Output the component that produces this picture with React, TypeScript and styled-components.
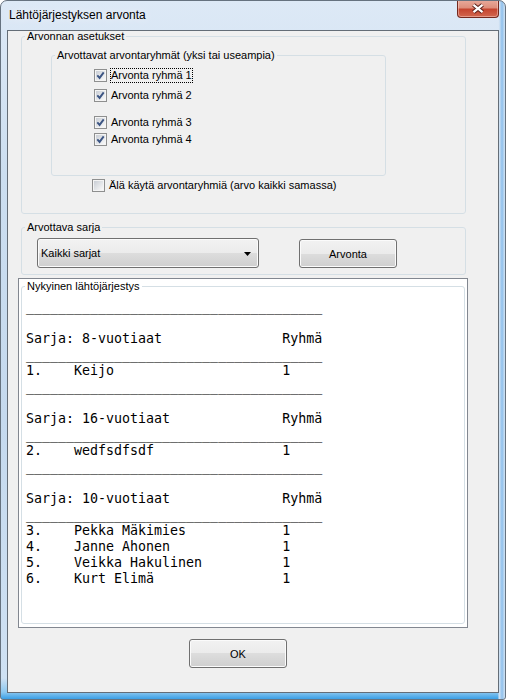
import React from 'react';
import styled, {createGlobalStyle} from 'styled-components';

const GlobalStyle = createGlobalStyle`
  html, body {
    margin: 0;
    padding: 0;
    background: #ffffff;
  }
  body {
    font-family: "Liberation Sans", Arial, sans-serif;
  }
`;

type Row = { pos: string; name: string; group: string };
type Series = { name: string; rows: Row[] };

const SERIES: Series[] = [
    {name: '8-vuotiaat', rows: [{pos: '1.', name: 'Keijo', group: '1'}]},
    {name: '16-vuotiaat', rows: [{pos: '2.', name: 'wedfsdfsdf', group: '1'}]},
    {
        name: '10-vuotiaat', rows: [
            {pos: '3.', name: 'Pekka Mäkimies', group: '1'},
            {pos: '4.', name: 'Janne Ahonen', group: '1'},
            {pos: '5.', name: 'Veikka Hakulinen', group: '1'},
            {pos: '6.', name: 'Kurt Elimä', group: '1'},
        ]
    },
];

const RULE = '_'.repeat(37);

const buildOrder = (series: Series[]) => {
    const lines: string[] = [];
    series.forEach(s => {
        lines.push(RULE, '');
        lines.push(`Sarja: ${s.name}`.padEnd(32) + 'Ryhmä');
        lines.push(RULE);
        s.rows.forEach(r => lines.push((r.pos.padEnd(6) + r.name).padEnd(32) + r.group));
    });
    return lines.join('\n');
};

const GROUPS = [
    {label: 'Arvonta ryhmä 1', mt: 6, focused: true},
    {label: 'Arvonta ryhmä 2', mt: 3, focused: false},
    {label: 'Arvonta ryhmä 3', mt: 10, focused: false},
    {label: 'Arvonta ryhmä 4', mt: 0, focused: false},
];

const Window = styled.div`
  box-sizing: border-box;
  width: 506px;
  height: 700px;
  display: flex;
  flex-direction: column;
  padding: 0 6px 6px 6px;
  border: 1px solid #66727f;
  border-radius: 7px 7px 3px 3px;
  overflow: hidden;
  background: linear-gradient(90deg, rgba(255, 255, 255, 0) 497px, #d8e6f4 498px, #8fc0ec 501px, #d2e3f3 504px),
  linear-gradient(180deg, #dde9f6 0%, #ccdef0 25%, #c5d9ee 60%, #cfe1f3 97%, #8cc8f0 99%, #3a9fe6 100%);
`;

const TitleBar = styled.div`
  flex: none;
  height: 29px;
  display: flex;
  justify-content: space-between;
  align-items: flex-start;
`;

const Title = styled.span`
  padding-left: 2px;
  font-size: 12px;
  line-height: 29px;
  color: #000;
  text-shadow: 0 0 8px rgba(255, 255, 255, 0.9);
`;

const CloseButton = styled.div`
  box-sizing: border-box;
  width: 42px;
  height: 18px;
  margin-top: -1px;
  border: 1px solid #74291e;
  border-top: none;
  border-radius: 0 0 4px 4px;
  background: linear-gradient(180deg, #e9ab9c 0%, #de8e7b 46%, #c5452f 54%, #d2674f 100%);
  box-shadow: inset 0 0 0 1px rgba(255, 220, 210, 0.45);
  display: flex;
  align-items: center;
  justify-content: center;
`;

const Client = styled.div`
  flex: 1;
  border: 1px solid #646d77;
  background: #f0f0f0;
  display: flex;
  flex-direction: column;
  align-items: flex-start;
  font-size: 11px;
  color: #000;
`;

const GroupBox = styled.fieldset<{ $w: number; $h?: number; $mt?: number; $ml?: number; $pb?: number }>`
  box-sizing: border-box;
  width: ${p => p.$w}px;
  ${p => p.$h ? `height: ${p.$h}px;` : ''}
  margin: ${p => p.$mt ?? 0}px 0 0 ${p => p.$ml ?? 0}px;
  padding: 0 0 ${p => p.$pb ?? 0}px 0;
  min-inline-size: 0;
  border: 1px solid #d5dfe5;
  border-radius: 3px;
  display: flex;
  flex-direction: column;
  align-items: flex-start;
`;

const Legend = styled.legend`
  margin-left: 3px;
  padding: 0 2px;
  font-size: 11px;
  line-height: 11px;
`;

const CheckRow = styled.div<{ $mt: number; $ml: number }>`
  height: 17px;
  margin: ${p => p.$mt}px 0 0 ${p => p.$ml}px;
  display: flex;
  align-items: center;
`;

const CheckLabel = styled.span<{ $focused?: boolean }>`
  margin-left: 3px;
  padding: 1px 1px;
  line-height: 13px;
  white-space: nowrap;
  outline: ${p => p.$focused ? '1px dotted #000' : 'none'};
  outline-offset: -1px;
`;

const BoxSvg = styled.svg`
  flex: none;
  display: block;
`;

const SelectRow = styled.div`
  margin: 5px 0 0 15px;
  display: flex;
  align-items: flex-start;
  gap: 40px;
`;

const ComboBox = styled.div`
  box-sizing: border-box;
  width: 222px;
  height: 30px;
  padding: 0 7px 0 3px;
  border: 1px solid #707070;
  border-radius: 3px;
  background: linear-gradient(180deg, #f2f2f2 0%, #ebebeb 50%, #dddddd 50%, #cfcfcf 100%);
  box-shadow: inset 0 0 0 1px #fbfbfb;
  display: flex;
  align-items: center;
  justify-content: space-between;
`;

const Arrow = styled.svg`
  margin-top: 2px;
`;

const Button = styled.div<{ $mt: number; $ml?: number }>`
  box-sizing: border-box;
  width: 98px;
  height: 29px;
  margin: ${p => p.$mt}px 0 0 ${p => p.$ml ?? 0}px;
  border: 1px solid #707070;
  border-radius: 3px;
  background: linear-gradient(180deg, #f2f2f2 0%, #ebebeb 50%, #dddddd 50%, #cfcfcf 100%);
  box-shadow: inset 0 0 0 1px #fbfbfb;
  display: flex;
  align-items: center;
  justify-content: center;
  font-size: 11px;
`;

const ListPanel = styled.div`
  box-sizing: border-box;
  width: 450px;
  height: 350px;
  margin: 3px 0 0 10px;
  border: 1px solid #828790;
  background: #ffffff;
  display: flex;
  flex-direction: column;
  align-items: flex-start;
`;

const OrderText = styled.pre`
  margin: 7px 0 0 4px;
  font-family: "DejaVu Sans Mono", "Liberation Mono", monospace;
  font-size: 13.3px;
  line-height: 16px;
  color: #000;
`;

const CheckBox = ({checked}: { checked: boolean }) => (
    <BoxSvg width="13" height="13" viewBox="0 0 13 13">
        <defs>
            <linearGradient id="cbFill" x1="0" y1="0" x2="1" y2="1">
                <stop offset="0" stopColor="#c9ced5"/>
                <stop offset="1" stopColor="#f9f9f9"/>
            </linearGradient>
        </defs>
        <rect x="0.5" y="0.5" width="12" height="12" fill="#f4f4f4" stroke="#8e8f8f"/>
        <rect x="2" y="2" width="9" height="9" fill="url(#cbFill)"/>
        {checked && (
            <path d="M3.3 6.4 L5.6 8.9 L9.7 3.4" fill="none" stroke="#3c5583" strokeWidth="1.9"/>
        )}
    </BoxSvg>
);

function App() {
    return (
        <>
            <GlobalStyle/>
            <Window>
                <TitleBar>
                    <Title>Lähtöjärjestyksen arvonta</Title>
                    <CloseButton>
                        <svg width="14" height="11" viewBox="0 0 14 11">
                            <path d="M2.5 1.8 L11.5 9.2 M11.5 1.8 L2.5 9.2" stroke="#5b2019" strokeWidth="4.2"/>
                            <path d="M2.5 1.8 L11.5 9.2 M11.5 1.8 L2.5 9.2" stroke="#ffffff" strokeWidth="2.2"/>
                        </svg>
                    </CloseButton>
                </TitleBar>
                <Client>
                    <GroupBox $w={445} $ml={13} $pb={19}>
                        <Legend>Arvonnan asetukset</Legend>
                        <GroupBox $w={335} $mt={8} $ml={29} $pb={27}>
                            <Legend>Arvottavat arvontaryhmät (yksi tai useampia)</Legend>
                            {GROUPS.map(g => (
                                <CheckRow key={g.label} $mt={g.mt} $ml={42}>
                                    <CheckBox checked/>
                                    <CheckLabel $focused={g.focused}>{g.label}</CheckLabel>
                                </CheckRow>
                            ))}
                        </GroupBox>
                        <CheckRow $mt={1} $ml={70}>
                            <CheckBox checked={false}/>
                            <CheckLabel>Älä käytä arvontaryhmiä (arvo kaikki samassa)</CheckLabel>
                        </CheckRow>
                    </GroupBox>

                    <GroupBox $w={445} $mt={8} $ml={13} $pb={6}>
                        <Legend>Arvottava sarja</Legend>
                        <SelectRow>
                            <ComboBox>
                                <span>Kaikki sarjat</span>
                                <Arrow width="7" height="4" viewBox="0 0 7 4">
                                    <path d="M0 0 H7 L3.5 4 Z" fill="#000"/>
                                </Arrow>
                            </ComboBox>
                            <Button $mt={1}>Arvonta</Button>
                        </SelectRow>
                    </GroupBox>

                    <ListPanel>
                        <GroupBox $w={444} $h={343} $mt={2} $ml={2}>
                            <Legend>Nykyinen lähtöjärjestys</Legend>
                            <OrderText>{buildOrder(SERIES)}</OrderText>
                        </GroupBox>
                    </ListPanel>

                    <Button $mt={11} $ml={181}>OK</Button>
                </Client>
            </Window>
        </>
    );
}

export default App;
